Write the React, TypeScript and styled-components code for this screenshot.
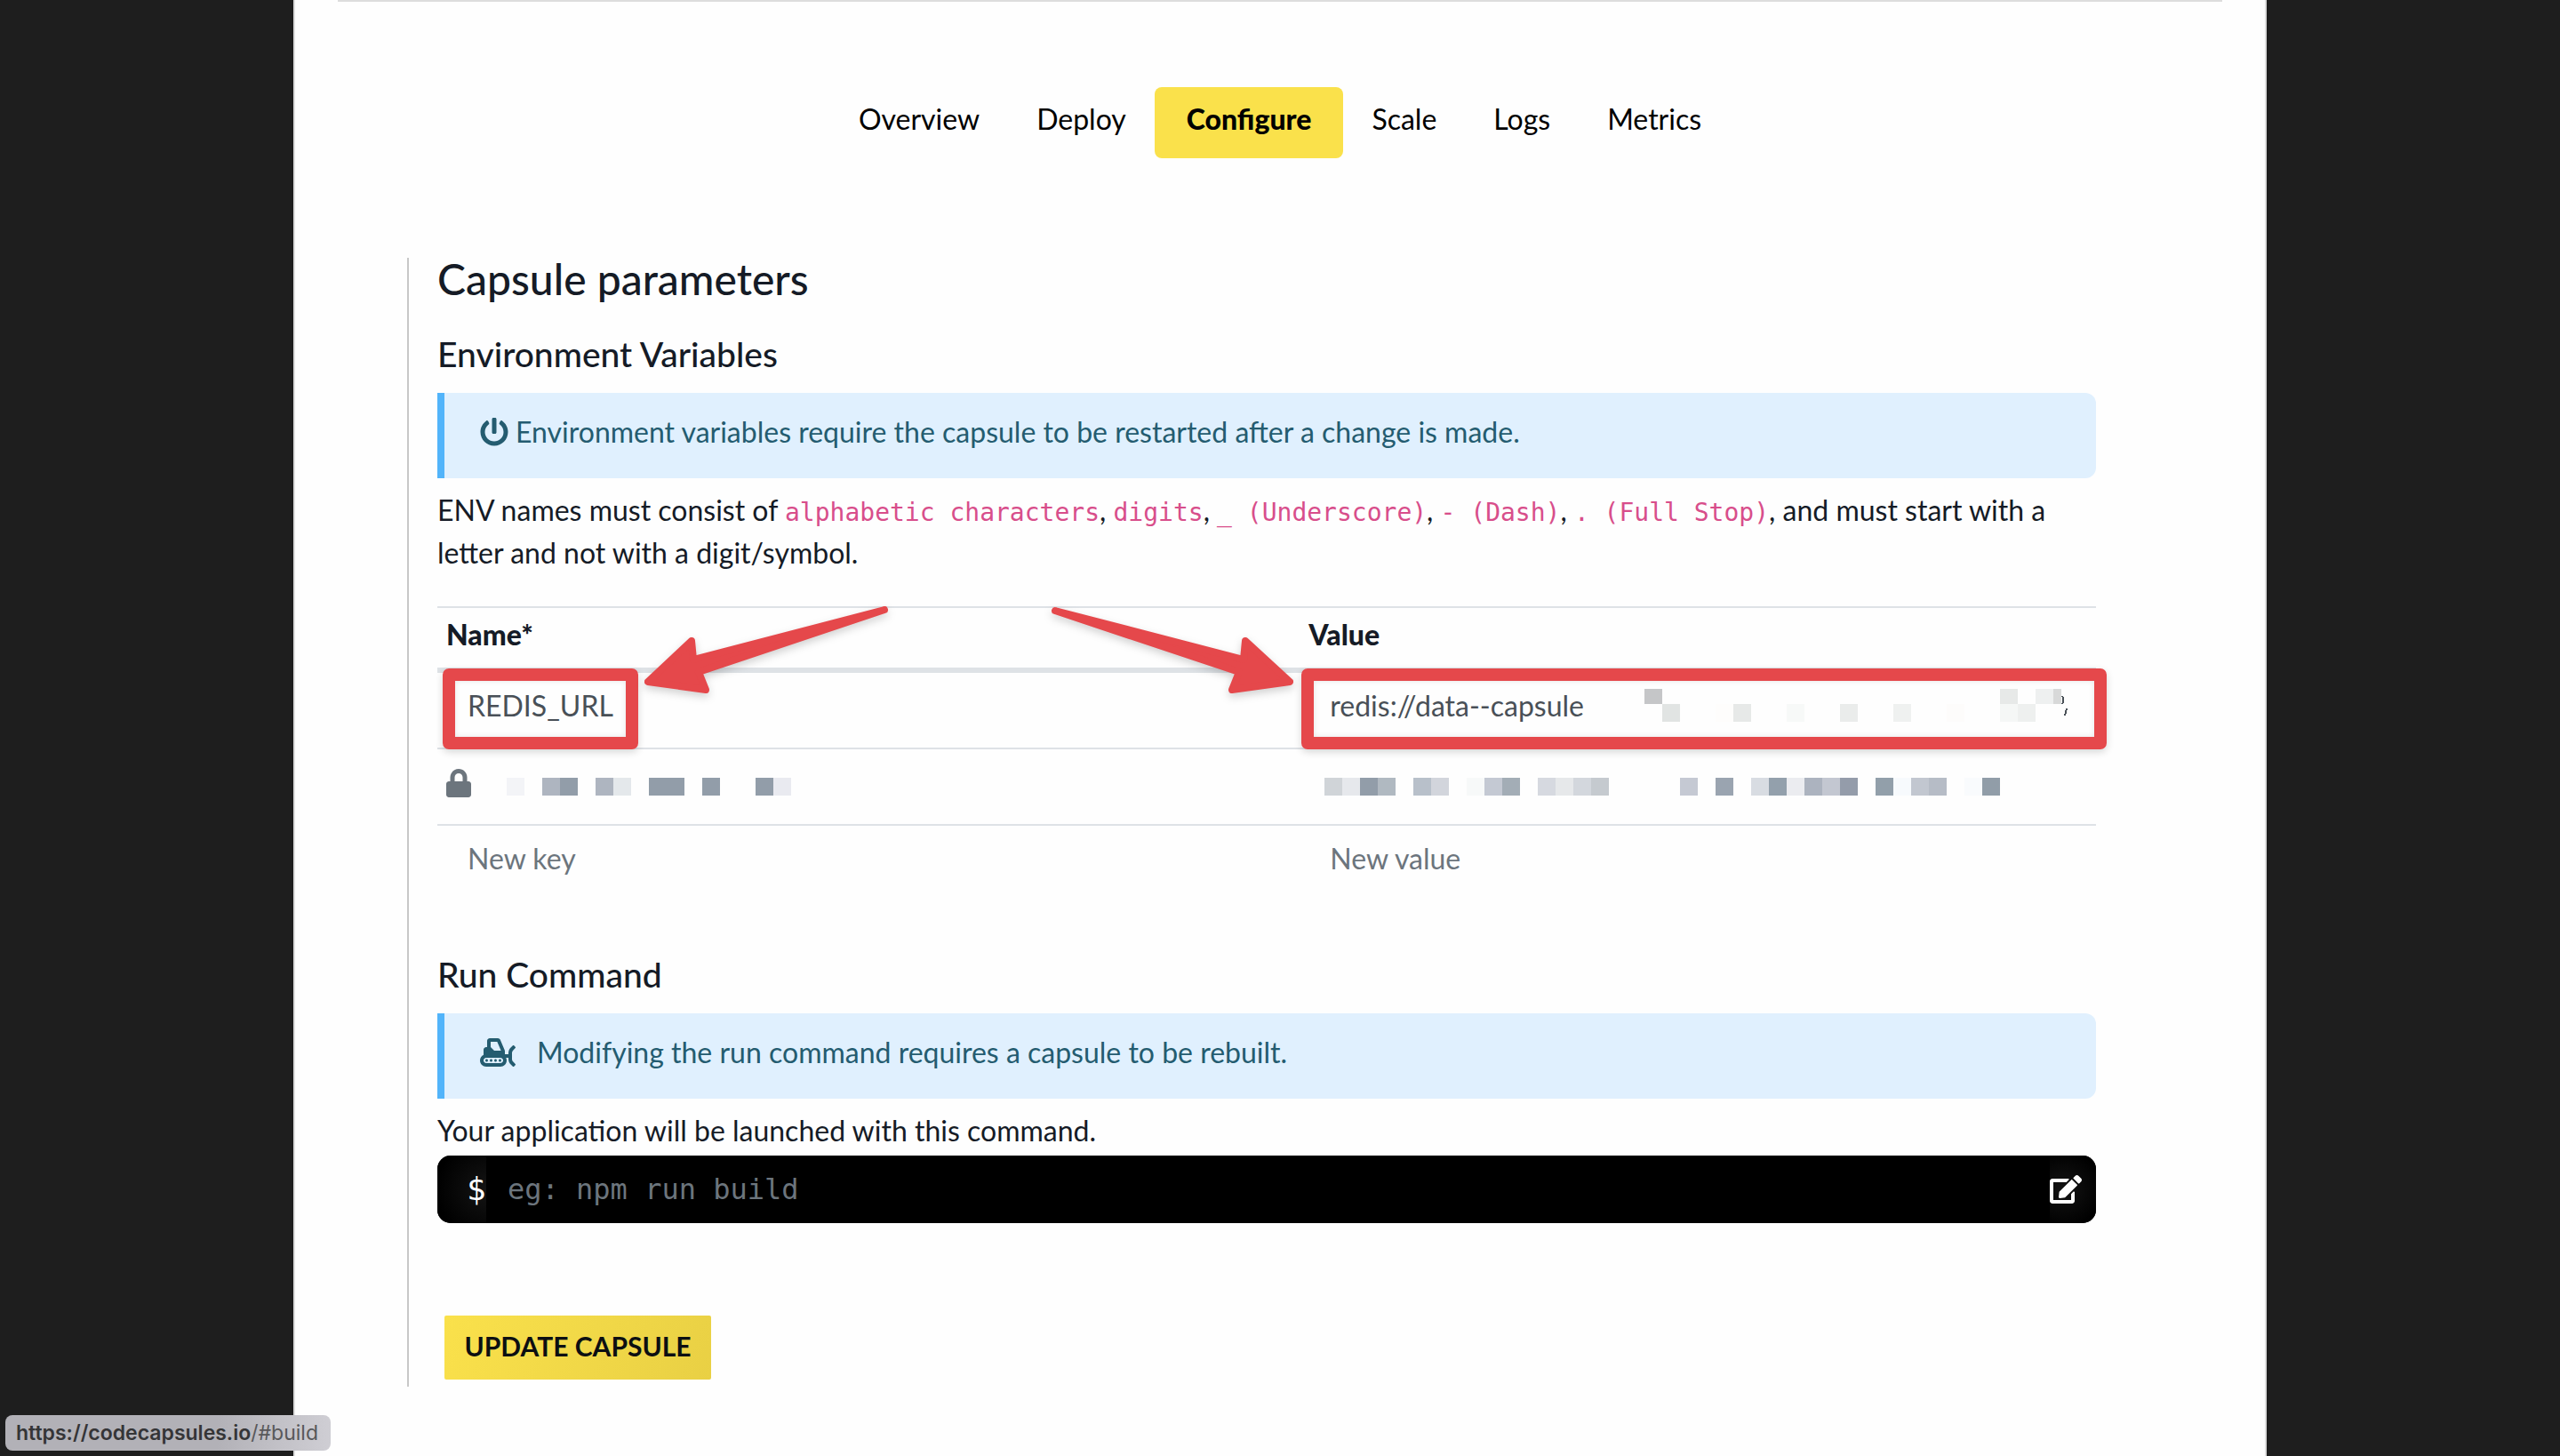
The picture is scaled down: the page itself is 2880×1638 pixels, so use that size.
import React from "react";
import styled, { createGlobalStyle } from "styled-components";
import { FaEdit, FaLock, FaPowerOff, FaSnowplow } from "react-icons/fa";

const sans = `Lato, "Open Sans", "Liberation Sans", sans-serif`;
const mono = `"DejaVu Sans Mono", "Liberation Mono", monospace`;
const red = "#e5484b";

const GlobalStyle = createGlobalStyle`
  *, *::before, *::after { box-sizing: border-box; }
  body {
    margin: 0;
    background: #1e1e1e;
    color: #151b26;
    font-family: ${sans};
    font-size: 32px;
    line-height: 48px;
  }
`;

const Panel = styled.main`
  max-width: 2220px;
  min-height: 100vh;
  margin: 0 auto;
  padding: 0 48px 48px;
  background: #fefefe;
  border: solid #dddddd;
  border-width: 0 2px;
`;

const Divider = styled.hr`
  height: 2px;
  margin: 0;
  border: 0;
  background: #dddddd;
`;

const Tabs = styled.nav`
  display: flex;
  justify-content: center;
  margin-top: 96px;
`;

const Tab = styled.a<{ $active?: boolean }>`
  padding: ${(p) => (p.$active ? "12px 36px 20px" : "12px 32px 20px")};
  border-radius: 8px;
  color: #000;
  text-decoration: none;
  font-weight: ${(p) => (p.$active ? 900 : 400)};
  background: ${(p) => (p.$active ? "#fae14b" : "transparent")};
`;

const Section = styled.form`
  margin: 112px 142px 0 78px;
  padding: 0 0 8px 32px;
  border-left: 2px solid #c8c8c8;
`;

const Title = styled.h2`
  margin: 0 0 36px;
  font-size: 48px;
  line-height: 48px;
  font-weight: 500;
`;

const Subtitle = styled.h3`
  margin: 0 0 20px;
  font-size: 39px;
  line-height: 48px;
  font-weight: 500;
`;

const Alert = styled.div<{ $gap: number; $iconWidth: number }>`
  display: flex;
  align-items: center;
  gap: ${(p) => p.$gap}px;
  padding: 20px 40px 28px;
  border-left: 8px solid #52b4fa;
  border-radius: 0 12px 12px 0;
  background: #e0f0fe;
  color: #245c70;

  svg {
    flex: none;
    height: 32px;
    width: ${(p) => p.$iconWidth}px;
  }
`;

const Text = styled.p`
  margin: 12px 0 0;
`;

const Code = styled.code`
  font-family: ${mono};
  font-size: 28px;
  line-height: 28px;
  color: #d84e8b;
`;

const TableWrap = styled.div`
  position: relative;
  margin: 36px 0 57px;
`;

const Table = styled.table`
  width: 100%;
  table-layout: fixed;
  border-collapse: separate;
  border-spacing: 0;
  border-top: 2px solid #dee2e6;
`;

const NameColumn = styled.col`
  width: 52%;
`;

const HeadCell = styled.th`
  padding: 6px 10px 13px;
  border-bottom: 6px solid #dee2e6;
  text-align: left;
  font-weight: 900;
`;

const Cell = styled.td`
  position: relative;
  height: 86px;
  padding: 0 10px;
  vertical-align: top;
  border-bottom: 2px solid #dee2e6;

  tr:last-child > & {
    border-bottom: 0;
  }
`;

const Field = styled.input`
  display: block;
  width: 100%;
  height: 72px;
  padding: 0 24px;
  border: 0;
  outline: 0;
  background: transparent;
  color: #495057;
  font: inherit;

  &::placeholder {
    color: #6c757d;
    opacity: 1;
  }
`;

const SecretField = styled.div`
  display: flex;
  align-items: center;

  ${Field} {
    flex: none;
    width: 378px;
  }
`;

const LockedField = styled.div<{ $indent: number }>`
  display: flex;
  align-items: center;
  gap: 40px;
  height: 76px;
  padding-left: ${(p) => p.$indent}px;
  color: #6c757d;

  > svg {
    flex: none;
  }
`;

const LockIcon = styled(FaLock)`
  width: 28px;
  height: 32px;
`;

const Highlight = styled.span<{ $left: number; $right?: number; $width?: number }>`
  position: absolute;
  top: -5px;
  bottom: -2px;
  left: ${(p) => p.$left}px;
  ${(p) => (p.$width ? `width: ${p.$width}px;` : `right: ${p.$right}px;`)}
  border: 14px solid ${red};
  border-radius: 7px;
  box-shadow: 0 3px 8px rgba(0, 0, 0, 0.16), inset 0 0 6px rgba(0, 0, 0, 0.1);
  pointer-events: none;
`;

const Arrows = styled.svg`
  position: absolute;
  top: 0;
  left: 0;
  overflow: visible;
  pointer-events: none;
  filter: drop-shadow(0 4px 5px rgba(0, 0, 0, 0.18));
`;

const CommandBar = styled.label`
  display: flex;
  height: 76px;
  margin-top: 4px;
  border-radius: 15px;
  overflow: hidden;
  background: #000;
  color: #fff;
`;

const Prompt = styled.span`
  width: 55px;
  padding: 14px 0 0 33px;
  font-family: ${mono};
  font-size: 36px;
  background: radial-gradient(circle at 100% 50%, #141414, #000 56px);
`;

const CommandInput = styled.input`
  flex: 1;
  min-width: 0;
  padding: 0 24px;
  border: 0;
  outline: 0;
  background: #000;
  color: #fff;
  font-family: ${mono};
  font-size: 32px;

  &::placeholder {
    color: #6c757d;
    opacity: 1;
  }
`;

const EditButton = styled.button`
  display: flex;
  align-items: center;
  width: 52px;
  padding: 0;
  border: 0;
  color: #fff;
  background: radial-gradient(circle at 15px 50%, #141414, #000 44px);

  svg {
    width: 36px;
    height: 32px;
  }
`;

const SubmitButton = styled.button`
  display: block;
  width: 300px;
  height: 72px;
  margin: 104px 0 0 8px;
  padding: 0 0 4px;
  border: 0;
  border-radius: 2px;
  background: linear-gradient(115deg, #fae14b, #e9d044);
  color: #0c0f12;
  font-family: ${sans};
  font-size: 30px;
  font-weight: 700;
`;

const StatusBar = styled.div`
  position: fixed;
  left: 6px;
  bottom: 6px;
  height: 40px;
  padding: 0 14px 0 12px;
  border-radius: 8px;
  background: linear-gradient(90deg, #b2b1b7 65%, #cfced4);
  color: #58585a;
  font-family: Inter, "Liberation Sans", sans-serif;
  font-size: 23px;
  line-height: 40px;

  b {
    color: #353537;
    font-weight: 600;
  }
`;

type Block = [x: number, y: number, fill: string, width?: number, height?: number];

const urlBlocks: Block[] = [
  [0, 0, "#c5c6c8", 20, 17], [20, 17, "#e1e4e3"], [80, 17, "#fefdfc"],
  [100, 17, "#e7e9e8"], [160, 17, "#f7f9f8"], [220, 17, "#eaeceb"],
  [280, 17, "#eff1f0"], [340, 17, "#fdfcfb"], [400, 0, "#e7e9e8", 20, 17],
  [400, 17, "#f5f7f6"], [420, 17, "#eef0ef"], [440, 0, "#eef0f0", 20, 17],
  [460, 0, "#d8d9d9", 9, 17],
];

const keyBlocks: Block[] = [
  [0, 8, "#f3f4f7"], [40, 8, "#aeb5c0"], [60, 8, "#929da9"],
  [100, 8, "#aeb5c0"], [120, 8, "#e4e8eb"], [160, 8, "#929da9", 40],
  [220, 8, "#929da9"], [280, 8, "#929da9"], [300, 8, "#e9eaf0"],
];

const valueBlocks: Block[] = [
  [0, 8, "#d0d4d8"], [20, 8, "#e6e8ec"], [40, 8, "#929da9"], [60, 8, "#b0b9c1"],
  [100, 8, "#b8c0ca"], [120, 8, "#d2d5dc"], [160, 8, "#f7f9f9"], [180, 8, "#c4c9d3"],
  [200, 8, "#a3adb6"], [240, 8, "#d6d9e0"], [260, 8, "#e6e8ea"], [280, 8, "#d3d7dd"],
  [300, 8, "#c5cacf"], [400, 8, "#c5c9d3"], [440, 8, "#9aa4b0"], [480, 8, "#d8dce2"],
  [500, 8, "#93a0ac"], [520, 8, "#ebecf0"], [540, 8, "#acb3bf"], [560, 8, "#c3c7d1"],
  [580, 8, "#949caa"], [620, 8, "#929faa"], [640, 8, "#f7fafd"], [660, 8, "#c2c7d0"],
  [680, 8, "#b6bcc6"], [720, 8, "#f9fbfd"], [740, 8, "#919da8"],
];

function Mosaic({ blocks, width, height, children }: {
  blocks: Block[];
  width: number;
  height: number;
  children?: React.ReactNode;
}) {
  return (
    <svg width={width} height={height} shapeRendering="crispEdges" aria-hidden="true">
      {blocks.map(([x, y, fill, w = 20, h = 20]) => (
        <rect key={`${x}-${y}`} x={x} y={y} width={w} height={h} fill={fill} />
      ))}
      {children}
    </svg>
  );
}

const tabs = ["Overview", "Deploy", "Configure", "Scale", "Logs", "Metrics"];

export default function App() {
  return (
    <>
      <GlobalStyle />
      <Panel>
        <Divider />
        <Tabs aria-label="Capsule">
          {tabs.map((tab) => (
            <Tab key={tab} href={`#${tab.toLowerCase()}`} $active={tab === "Configure"}>
              {tab}
            </Tab>
          ))}
        </Tabs>
        <Section onSubmit={(e) => e.preventDefault()}>
          <Title>Capsule parameters</Title>
          <Subtitle>Environment Variables</Subtitle>
          <Alert $gap={8} $iconWidth={32}>
            <FaPowerOff />
            <span>Environment variables require the capsule to be restarted after a change is made.</span>
          </Alert>
          <Text>
            ENV names must consist of <Code>alphabetic characters</Code>, <Code>digits</Code>,{" "}
            <Code>_ (Underscore)</Code>, <Code>- (Dash)</Code>, <Code>. (Full Stop)</Code>, and must
            start with a letter and not with a digit/symbol.
          </Text>
          <TableWrap>
            <Table>
              <colgroup>
                <NameColumn />
                <col />
              </colgroup>
              <thead>
                <tr>
                  <HeadCell scope="col">Name*</HeadCell>
                  <HeadCell scope="col">Value</HeadCell>
                </tr>
              </thead>
              <tbody>
                <tr>
                  <Cell>
                    <Field aria-label="Name" defaultValue="REDIS_URL" />
                    <Highlight $left={6} $width={220} />
                  </Cell>
                  <Cell>
                    <SecretField>
                      <Field aria-label="Value" defaultValue="redis://data--capsule" />
                      <Mosaic blocks={urlBlocks} width={476} height={37}>
                        <path d="M470 8q3 4 0 9M475 22l-2 8" fill="none" stroke="#495057" strokeWidth="2" />
                      </Mosaic>
                    </SecretField>
                    <Highlight $left={2} $right={-12} />
                  </Cell>
                </tr>
                <tr>
                  <Cell>
                    <LockedField $indent={0}>
                      <LockIcon />
                      <Mosaic blocks={keyBlocks} width={320} height={28} />
                    </LockedField>
                  </Cell>
                  <Cell>
                    <LockedField $indent={18}>
                      <Mosaic blocks={valueBlocks} width={760} height={28} />
                    </LockedField>
                  </Cell>
                </tr>
                <tr>
                  <Cell>
                    <Field aria-label="New key" placeholder="New key" />
                  </Cell>
                  <Cell>
                    <Field aria-label="New value" placeholder="New value" />
                  </Cell>
                </tr>
              </tbody>
            </Table>
            <Arrows width="1866" height="100" aria-hidden="true">
              <g fill={red} stroke={red} strokeWidth="8" strokeLinejoin="round">
                <path d="M503 4L288 60L286 39L237 85L302 94L294 74Z" />
                <path d="M695 5L907 60L909 39L959 85L894 94L902 74Z" />
              </g>
            </Arrows>
          </TableWrap>
          <Subtitle>Run Command</Subtitle>
          <Alert $gap={24} $iconWidth={40}>
            <FaSnowplow />
            <span>Modifying the run command requires a capsule to be rebuilt.</span>
          </Alert>
          <Text>Your application will be launched with this command.</Text>
          <CommandBar>
            <Prompt>$</Prompt>
            <CommandInput aria-label="Run command" placeholder="eg: npm run build" />
            <EditButton type="button" aria-label="Edit run command">
              <FaEdit />
            </EditButton>
          </CommandBar>
          <SubmitButton type="submit">UPDATE CAPSULE</SubmitButton>
        </Section>
      </Panel>
      <StatusBar>
        <b>https://codecapsules.io</b>/#build
      </StatusBar>
    </>
  );
}
